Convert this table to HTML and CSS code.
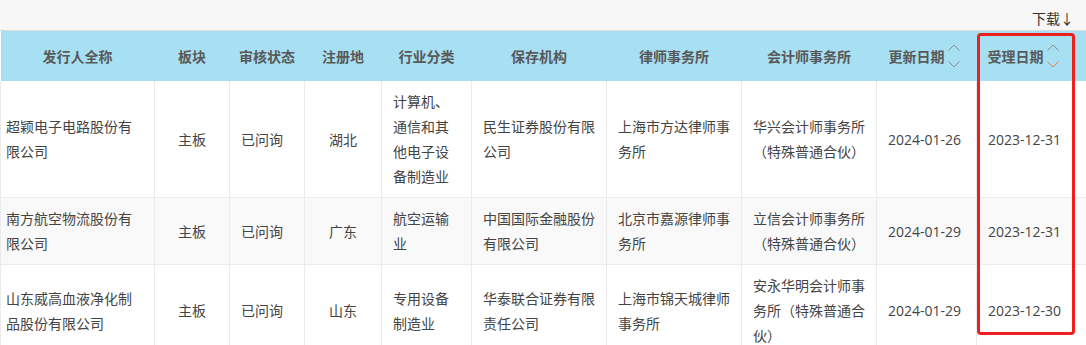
FILE: index.html
```html
<!DOCTYPE html>
<html lang="zh-CN">
<head>
<meta charset="utf-8">
<title>IPO 受理列表</title>
<link rel="stylesheet" href="styles.css">
</head>
<body>
<div class="page">
  <div class="toolbar">
    <a class="download" href="#">下载↓</a>
  </div>
  <table class="list">
    <colgroup>
      <col style="width:154px"><col style="width:75px"><col style="width:75px"><col style="width:77px"><col style="width:90px"><col style="width:135px"><col style="width:135px"><col style="width:135px"><col style="width:100px"><col style="width:110px">
    </colgroup>
    <thead>
      <tr>
        <th>发行人全称</th>
        <th>板块</th>
        <th>审核状态</th>
        <th>注册地</th>
        <th>行业分类</th>
        <th>保存机构</th>
        <th>律师事务所</th>
        <th>会计师事务所</th>
        <th class="sortable"><span class="th-inner">更新日期<svg class="sort" width="12" height="24" viewBox="0 0 12 24"><polyline points="0.5,6.5 6,1 11.5,6.5" class="up"/><polyline points="0.5,17.5 6,23 11.5,17.5" class="down"/></svg></span></th>
        <th class="sortable sorted"><span class="th-inner">受理日期<svg class="sort" width="12" height="24" viewBox="0 0 12 24"><polyline points="0.5,6.5 6,1 11.5,6.5" class="up"/><polyline points="0.5,17.5 6,23 11.5,17.5" class="down"/></svg></span></th>
      </tr>
    </thead>
    <tbody>
      <tr>
        <td class="name">超颖电子电路股份有限公司</td>
        <td class="center">主板</td>
        <td>已问询</td>
        <td class="center">湖北</td>
        <td>计算机、通信和其他电子设备制造业</td>
        <td>民生证券股份有限公司</td>
        <td>上海市方达律师事务所</td>
        <td>华兴会计师事务所（特殊普通合伙）</td>
        <td>2024-01-26</td>
        <td>2023-12-31</td>
      </tr>
      <tr class="alt">
        <td class="name">南方航空物流股份有限公司</td>
        <td class="center">主板</td>
        <td>已问询</td>
        <td class="center">广东</td>
        <td>航空运输业</td>
        <td>中国国际金融股份有限公司</td>
        <td>北京市嘉源律师事务所</td>
        <td>立信会计师事务所（特殊普通合伙）</td>
        <td>2024-01-29</td>
        <td>2023-12-31</td>
      </tr>
      <tr>
        <td class="name">山东威高血液净化制品股份有限公司</td>
        <td class="center">主板</td>
        <td>已问询</td>
        <td class="center">山东</td>
        <td>专用设备制造业</td>
        <td>华泰联合证券有限责任公司</td>
        <td>上海市锦天城律师事务所</td>
        <td>安永华明会计师事务所（特殊普通合伙）</td>
        <td>2024-01-29</td>
        <td>2023-12-30</td>
      </tr>
    </tbody>
  </table>
  <div class="highlight"></div>
</div>
</body>
</html>
```
FILE: styles.css
```css
html, body {
  margin: 0;
  padding: 0;
  background: #ffffff;
}
body {
  font-family: "Open Sans", "Noto Sans CJK SC", sans-serif;
  font-size: 14px;
  color: #444;
}
.page {
  position: relative;
  width: 1086px;
}
.toolbar {
  height: 30px;
  background: #f7f7f7;
  border-bottom: 1px solid #dcdcdc;
  display: flex;
  justify-content: flex-end;
  align-items: flex-start;
  padding-right: 12px;
  box-sizing: content-box;
}
.download {
  color: #333;
  text-decoration: none;
  line-height: 20px;
  margin-top: 9px;
}
.list {
  width: 1086px;
  table-layout: fixed;
  border-collapse: collapse;
}
.list th {
  height: 50px;
  padding: 0;
  background: #a7dff3;
  color: #595959;
  font-weight: bold;
  text-align: center;
  vertical-align: middle;
  border: none;
}
.list th.sortable {
  text-align: left;
  padding-left: 12px;
}
.list th.sorted {
  padding-left: 11px;
}
.th-inner {
  display: inline-flex;
  align-items: center;
  gap: 3px;
}
.sort {
  display: block;
  fill: none;
  stroke: #858b8e;
  stroke-width: 1;
}
.sorted .sort .down {
  stroke: #f07c3e;
}
.list td {
  border: 1px solid #ebebeb;
  padding: 8px 11px;
  line-height: 25px;
  vertical-align: middle;
  text-align: left;
  word-break: break-all;
}
.list td.name {
  padding-left: 5px;
  padding-right: 10px;
}
.list td.center {
  text-align: center;
}
.list tr.alt td {
  background: #f9f9f9;
}
.list tbody tr:first-child td {
  border-top: none;
}
.highlight {
  position: absolute;
  left: 977px;
  top: 33px;
  width: 98px;
  height: 302px;
  box-sizing: border-box;
  border: 3px solid #f01f1f;
  border-radius: 4px;
  pointer-events: none;
}
```
